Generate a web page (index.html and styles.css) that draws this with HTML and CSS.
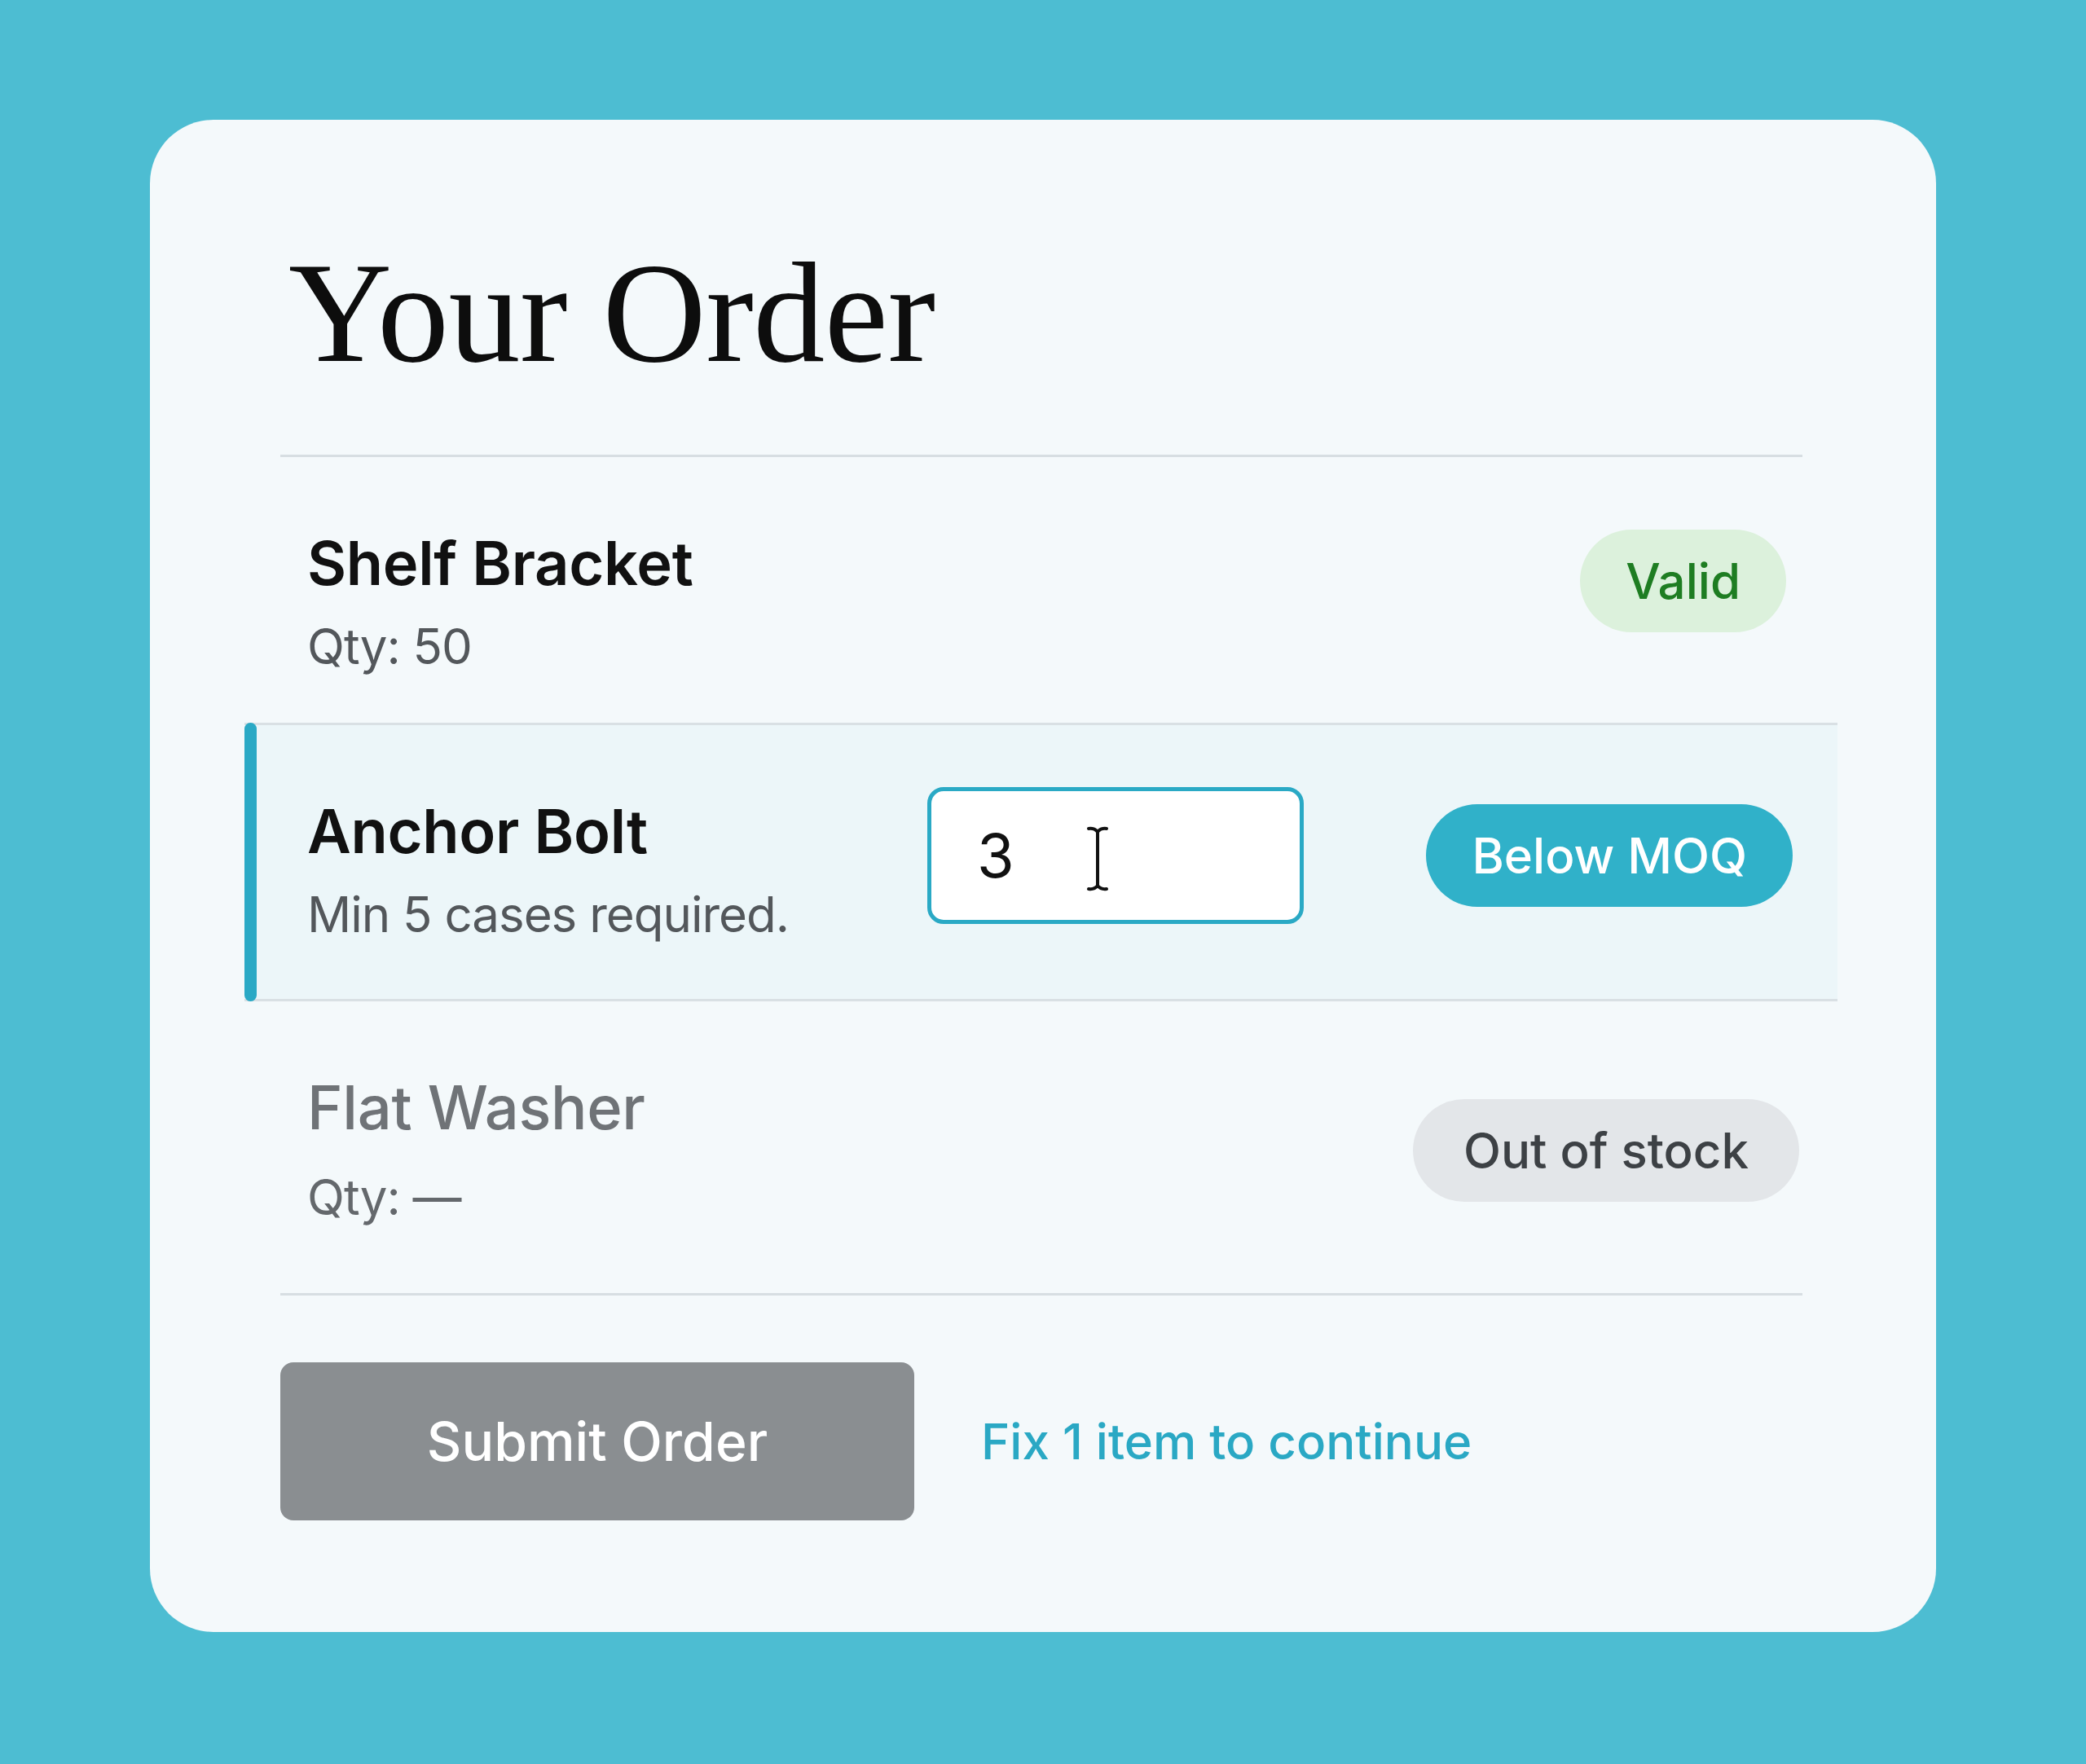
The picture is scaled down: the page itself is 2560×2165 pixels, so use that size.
FILE: index.html
```html
<!DOCTYPE html>
<html lang="en">
<head>
    <meta charset="UTF-8">
    <meta name="viewport" content="width=device-width, initial-scale=1.0">
    <title>Your Order</title>
    <link rel="stylesheet" href="styles.css">
</head>
<body>
    <div class="order-card">
        <div class="order-head">
            <h1>Your Order</h1>
        </div>

        <div class="order-items">
            <div class="item item-ok">
                <div class="item-info">
                    <div class="item-name">Shelf Bracket</div>
                    <div class="item-meta">Qty: 50</div>
                </div>
                <span class="badge badge-valid">Valid</span>
            </div>

            <div class="item item-warning">
                <div class="item-info item-info-fixed">
                    <div class="item-name">Anchor Bolt</div>
                    <div class="item-meta">Min 5 cases required.</div>
                </div>
                <div class="qty-field">
                    <input type="text" class="qty-input" value="3">
                    <span class="text-cursor">
                        <svg width="26" height="80" viewBox="0 0 26 80">
                            <path d="M13 5 V75" fill="none" stroke="#111" stroke-width="4"/>
                            <path d="M2 3 Q9 2 13 7 Q17 2 24 3" fill="none" stroke="#111" stroke-width="4" stroke-linecap="round"/>
                            <path d="M2 77 Q9 78 13 73 Q17 78 24 77" fill="none" stroke="#111" stroke-width="4" stroke-linecap="round"/>
                        </svg>
                    </span>
                </div>
                <span class="badge badge-moq">Below MOQ</span>
            </div>

            <div class="item item-disabled">
                <div class="item-info">
                    <div class="item-name">Flat Washer</div>
                    <div class="item-meta">Qty: &mdash;</div>
                </div>
                <span class="badge badge-stock">Out of stock</span>
            </div>
        </div>

        <div class="order-foot">
            <button class="submit-btn" disabled>Submit Order</button>
            <span class="fix-note">Fix 1 item to continue</span>
        </div>
    </div>
</body>
</html>
```

FILE: styles.css
```css
body {
    margin: 0;
    padding: 147px 184px 165px;
    background-color: #4dbdd2;
    font-family: Inter, "Liberation Sans", Arial, sans-serif;
    color: #111;
}
.order-card {
    background-color: #f4f9fb;
    border-radius: 78px;
    padding: 150px 164px 137px 160px;
}
.order-head {
    padding-bottom: 87px;
    border-bottom: 3px solid #d7dee2;
}
.order-head h1 {
    margin: 0 0 0 10px;
    font-family: "Liberation Serif", "Times New Roman", serif;
    font-weight: 400;
    font-size: 176px;
    line-height: 174px;
    letter-spacing: -0.5px;
    color: #0d0d0d;
}
.item {
    display: flex;
    align-items: center;
    padding: 86px 12px 54px 33px;
}
.item:last-child {
    padding-bottom: 78px;
}
.item-info {
    flex: 1;
}
.item-info-fixed {
    flex: none;
    width: 761px;
}
.item-name {
    font-size: 74px;
    line-height: 88px;
    font-weight: 600;
    letter-spacing: -0.3px;
    color: #111;
}
.item-meta {
    margin-top: 18px;
    font-size: 60px;
    line-height: 80px;
    letter-spacing: -1px;
    color: #53575b;
}
.item-ok .badge {
    align-self: flex-start;
    margin-top: 3px;
}
.item-warning {
    position: relative;
    align-items: flex-start;
    margin: 0 -43px 0 -44px;
    padding-left: 77px;
    padding-right: 55px;
    padding-bottom: 64px;
    background-color: #ecf6f9;
    border-top: 3px solid #d9e0e4;
    border-bottom: 3px solid #d9e0e4;
}
.item-warning::before {
    content: "";
    position: absolute;
    left: 0;
    top: -3px;
    bottom: -3px;
    width: 15px;
    border-radius: 8px;
    background-color: #2aa9c5;
}
.item-warning .qty-field {
    margin-top: -10px;
}
.item-warning .badge {
    margin-top: 11px;
}
.item-disabled .item-name {
    font-weight: 500;
    color: #6f7377;
}
.item-disabled .item-meta {
    margin-top: 26px;
    color: #64686c;
}
.qty-field {
    position: relative;
}
.qty-input {
    display: block;
    box-sizing: border-box;
    width: 462px;
    height: 168px;
    padding: 0 0 0 56px;
    border: 5px solid #2aa9c5;
    border-radius: 20px;
    background-color: #fff;
    font-family: Inter, "Liberation Sans", Arial, sans-serif;
    font-size: 74px;
    color: #111;
    outline: none;
}
.text-cursor {
    position: absolute;
    left: 196px;
    top: 48px;
    display: block;
    line-height: 0;
}
.badge {
    margin-left: auto;
    height: 126px;
    line-height: 126px;
    padding: 0 56px;
    border-radius: 63px;
    font-size: 60px;
    font-weight: 500;
    white-space: nowrap;
}
.badge-valid {
    margin-right: 8px;
    background-color: #dcf1dc;
    color: #1e7d22;
}
.badge-moq {
    background-color: #30b1c9;
    color: #fff;
}
.badge-stock {
    margin-right: -8px;
    padding: 0 62px;
    background-color: #e3e6e9;
    color: #3d4145;
}
.order-foot {
    display: flex;
    align-items: center;
    gap: 82px;
    padding-top: 82px;
    border-top: 3px solid #d7dee2;
}
.submit-btn {
    width: 778px;
    height: 194px;
    border: none;
    border-radius: 16px;
    background-color: #8a8e91;
    color: #fff;
    font-family: Inter, "Liberation Sans", Arial, sans-serif;
    font-size: 66px;
    font-weight: 500;
    cursor: not-allowed;
}
.fix-note {
    font-size: 60px;
    font-weight: 500;
    color: #2aa8c4;
}
```
